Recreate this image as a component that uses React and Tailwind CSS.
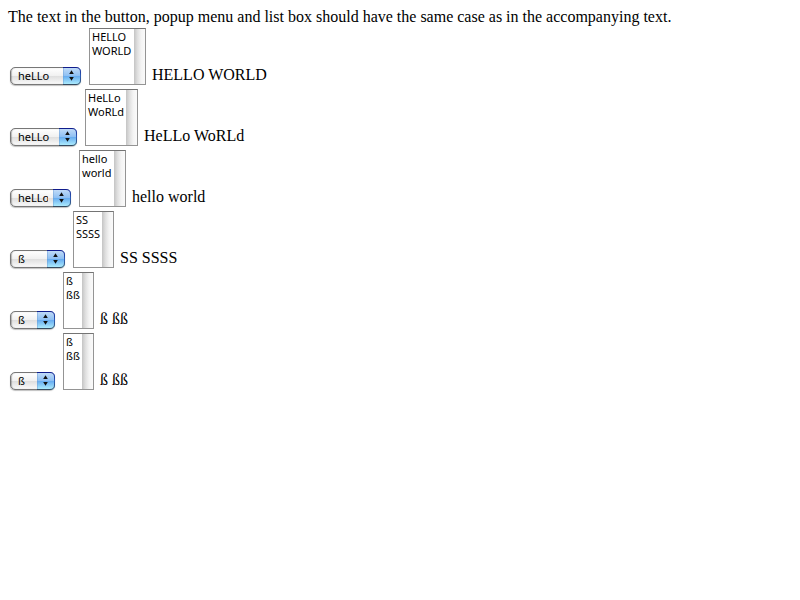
const rows = [
  { id: "upper", popup: "heLLo", options: ["HELLO", "WORLD"], popupWidth: "w-[71px]", listWidth: "w-[57px]" },
  { id: "none", popup: "heLLo", options: ["HeLLo", "WoRLd"], popupWidth: "w-[67px]", listWidth: "w-[53px]" },
  { id: "lower", popup: "heLLo", options: ["hello", "world"], popupWidth: "w-[61px]", listWidth: "w-[47px]" },
  { id: "sharp-upper", popup: "ß", options: ["SS", "SSSS"], popupWidth: "w-[55px]", listWidth: "w-[41px]" },
  { id: "sharp-none", popup: "ß", options: ["ß", "ßß"], popupWidth: "w-[45px]", listWidth: "w-[31px]" },
  { id: "sharp-lower", popup: "ß", options: ["ß", "ßß"], popupWidth: "w-[45px]", listWidth: "w-[31px]" },
];

function PopupMenu({ value, width }) {
  return (
    <div className={`relative h-[18px] rounded-[5px] shadow-[0_1px_1px_rgba(0,0,0,0.25)] ${width}`}>
      <select
        aria-label={`Popup menu ${value}`}
        className="block h-full w-full appearance-none rounded-[5px] border border-[#777] bg-[linear-gradient(#fff,#f1f1f1_48%,#dfdfdf_52%,#fafafa)] pr-[22px] pl-[7px] font-['Noto_Sans','Open_Sans',sans-serif] text-[11px] leading-4 text-black shadow-[inset_1px_0_1px_rgba(0,0,0,0.25)]"
      >
        <option>{value}</option>
      </select>
      <svg
        className="pointer-events-none absolute top-0 right-0 h-[18px] w-[18px]"
        viewBox="0 0 18 18"
        aria-hidden="true"
      >
        <defs>
          <linearGradient id="arrowFill" x1="0" y1="0" x2="0" y2="1">
            <stop offset="0" stopColor="#c6def8" />
            <stop offset="0.48" stopColor="#8fc0f3" />
            <stop offset="0.52" stopColor="#68adf0" />
            <stop offset="1" stopColor="#b4f3ff" />
          </linearGradient>
          <linearGradient id="arrowEdge" x1="0" y1="0" x2="0" y2="1">
            <stop offset="0" stopColor="#101c8c" />
            <stop offset="0.5" stopColor="#2d5eb8" />
            <stop offset="1" stopColor="#34495f" />
          </linearGradient>
        </defs>
        <path d="M0 0H13Q18 0 18 5V13Q18 18 13 18H0Z" fill="url(#arrowFill)" />
        <path d="M0 .5H13Q17.5.5 17.5 5V13Q17.5 17.5 13 17.5H0" fill="none" stroke="url(#arrowEdge)" />
        <path d="M.5 1V17" stroke="#6f9ed2" strokeOpacity="0.45" />
        <path d="M8.5 3.2L10.8 7H6.2ZM8.5 13.8L10.8 10H6.2Z" fill="#111" />
      </svg>
    </div>
  );
}

function ListBox({ id, options, width }) {
  return (
    <select
      id={id}
      multiple
      size={4}
      className={`block h-[57px] appearance-none overflow-hidden rounded-none border border-[#949494] border-t-[#747474] bg-white bg-[linear-gradient(to_right,#c4c4c4,#dedede_30%,#f4f4f4_65%,#fafafa)] bg-[length:11px_100%] bg-right bg-no-repeat p-0 font-['Noto_Sans','Open_Sans',sans-serif] text-[11px] text-black ${width}`}
    >
      {options.map((option) => (
        <option key={option} className="h-[14px] min-h-0 px-[2px] py-0 leading-[12px]">
          {option}
        </option>
      ))}
    </select>
  );
}

export default function App() {
  return (
    <main className="bg-white p-2 font-['Liberation_Serif',serif] text-[16px] text-black">
      <p className="leading-[18px]">
        The text in the button, popup menu and list box should have the same case as in the accompanying text.
      </p>
      <div className="mt-[2px] flex flex-col gap-1 pl-[2px]">
        {rows.map((row) => (
          <div key={row.id} className="flex items-end">
            <PopupMenu value={row.popup} width={row.popupWidth} />
            <div className="ml-2">
              <ListBox id={row.id} options={row.options} width={row.listWidth} />
            </div>
            <label htmlFor={row.id} className="ml-[6px] leading-5">
              {row.options.join(" ")}
            </label>
          </div>
        ))}
      </div>
    </main>
  );
}
